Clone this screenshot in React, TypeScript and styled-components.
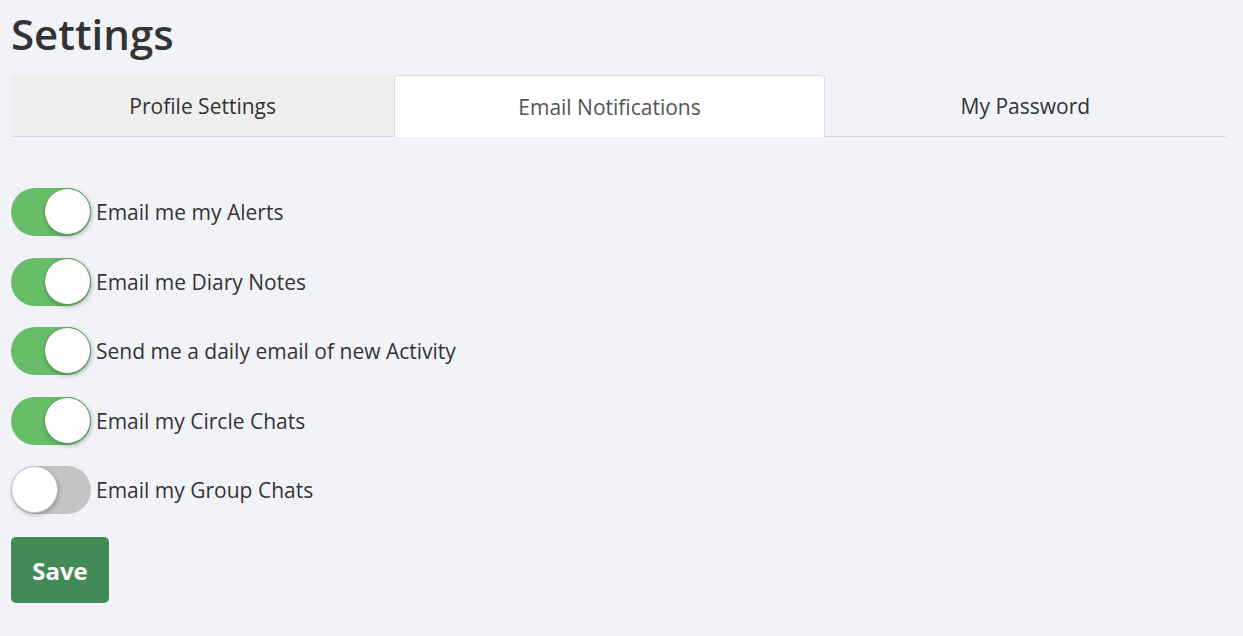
import React, { useState } from "react";
import styled, { createGlobalStyle } from "styled-components";

const Global = createGlobalStyle`
  html, body { margin: 0; padding: 0; background: #f2f3f8; }
  body { font-family: "Open Sans", "Noto Sans", sans-serif; color: #333; }
  * { box-sizing: border-box; }
`;

const Page = styled.div`
  padding: 0 17px 0 11px;
  min-height: 636px;
`;

const Title = styled.h1`
  margin: 0;
  padding-top: 7px;
  font-size: 42px;
  line-height: 54px;
  font-weight: 600;
  color: #333;
`;

const TabBar = styled.div`
  display: flex;
  margin-top: 14px;
  height: 62px;
`;

const Tab = styled.button<{ $grow: number; $active?: boolean; $filled?: boolean }>`
  flex: ${(p) => p.$grow} 1 0;
  font-family: inherit;
  font-size: 21px;
  color: ${(p) => (p.$active ? "#555" : "#333")};
  background: ${(p) => (p.$active ? "#fff" : p.$filled ? "#efefef" : "transparent")};
  border: none;
  border-bottom: 1px solid #dcdcdf;
  ${(p) =>
    p.$active &&
    `border: 1px solid #dcdcdf; border-bottom: none; border-radius: 4px 4px 0 0;`}
  border-top-left-radius: ${(p) => (p.$filled ? "3px" : "")};
  padding: 0;
  cursor: pointer;
`;

const List = styled.div`
  display: flex;
  flex-direction: column;
  gap: 21.5px;
  margin-top: 51px;
`;

const Row = styled.label`
  display: flex;
  align-items: center;
  gap: 5px;
  font-size: 21px;
  color: #333;
  cursor: pointer;
`;

const Track = styled.span<{ $on: boolean }>`
  position: relative;
  display: inline-block;
  width: 80px;
  height: 48px;
  border-radius: 24px;
  background: ${(p) => (p.$on ? "#68be68" : "#c4c4c4")};
  flex-shrink: 0;
`;

const Knob = styled.span<{ $on: boolean }>`
  position: absolute;
  top: 0;
  left: ${(p) => (p.$on ? "33px" : "0")};
  width: 47px;
  height: 47px;
  border-radius: 50%;
  background: #fff;
  border: 1px solid ${(p) => (p.$on ? "#4f9d55" : "#c4c4c4")};
  box-shadow: 1px 2px 4px rgba(0, 0, 0, 0.25);
`;

const SaveButton = styled.button`
  margin-top: 23px;
  width: 98px;
  height: 66px;
  background: #438b56;
  color: #fff;
  border: none;
  border-radius: 5px;
  font-family: inherit;
  font-size: 24px;
  font-weight: 700;
  cursor: pointer;
`;

const items = [
  { label: "Email me my Alerts", on: true },
  { label: "Email me Diary Notes", on: true },
  { label: "Send me a daily email of new Activity", on: true },
  { label: "Email my Circle Chats", on: true },
  { label: "Email my Group Chats", on: false },
];

export default function App() {
  const [state, setState] = useState(items.map((i) => i.on));
  return (
    <Page>
      <Global />
      <Title>Settings</Title>
      <TabBar>
        <Tab $grow={384} $filled>Profile Settings</Tab>
        <Tab $grow={429} $active>Email Notifications</Tab>
        <Tab $grow={402}>My Password</Tab>
      </TabBar>
      <List>
        {items.map((it, i) => (
          <Row key={it.label} onClick={() => setState((s) => s.map((v, j) => (j === i ? !v : v)))}>
            <Track $on={state[i]}>
              <Knob $on={state[i]} />
            </Track>
            {it.label}
          </Row>
        ))}
      </List>
      <SaveButton>Save</SaveButton>
    </Page>
  );
}
